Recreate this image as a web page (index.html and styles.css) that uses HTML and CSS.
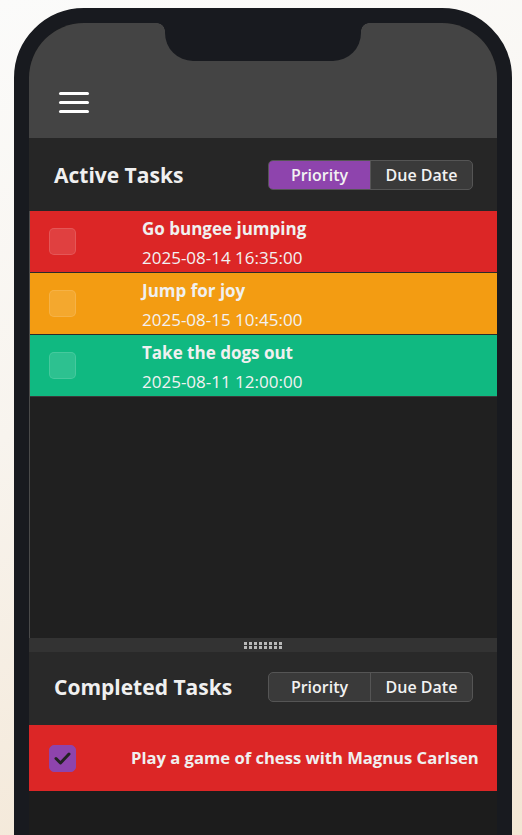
FILE: index.html
```html
<!DOCTYPE html>
<html lang="en">
<head>
<meta charset="utf-8">
<title>Tasks</title>
<link rel="stylesheet" href="styles.css">
</head>
<body>
<div class="phone">
  <div class="notch"></div>
  <div class="screen">
    <header class="topbar">
      <button class="menu" aria-label="Menu"><span></span><span></span><span></span></button>
    </header>

    <section class="panel">
      <div class="section-head">
        <h2>Active Tasks</h2>
        <div class="toggle">
          <button class="on">Priority</button>
          <button>Due Date</button>
        </div>
      </div>
      <ul class="list">
        <li class="task red">
          <span class="check"></span>
          <div class="info">
            <div class="title">Go bungee jumping</div>
            <div class="date">2025-08-14 16:35:00</div>
          </div>
        </li>
        <li class="task orange">
          <span class="check"></span>
          <div class="info">
            <div class="title">Jump for joy</div>
            <div class="date">2025-08-15 10:45:00</div>
          </div>
        </li>
        <li class="task green">
          <span class="check"></span>
          <div class="info">
            <div class="title">Take the dogs out</div>
            <div class="date">2025-08-11 12:00:00</div>
          </div>
        </li>
      </ul>
    </section>

    <div class="divider">
      <svg width="38" height="7" viewBox="0 0 38 7" aria-hidden="true">
        <g fill="#b9b9b9">
          <rect x="0" y="0" width="3" height="3"/><rect x="5" y="0" width="3" height="3"/><rect x="10" y="0" width="3" height="3"/><rect x="15" y="0" width="3" height="3"/><rect x="20" y="0" width="3" height="3"/><rect x="25" y="0" width="3" height="3"/><rect x="30" y="0" width="3" height="3"/><rect x="35" y="0" width="3" height="3"/>
          <rect x="0" y="4" width="3" height="3"/><rect x="5" y="4" width="3" height="3"/><rect x="10" y="4" width="3" height="3"/><rect x="15" y="4" width="3" height="3"/><rect x="20" y="4" width="3" height="3"/><rect x="25" y="4" width="3" height="3"/><rect x="30" y="4" width="3" height="3"/><rect x="35" y="4" width="3" height="3"/>
        </g>
      </svg>
    </div>

    <section class="panel completed">
      <div class="section-head">
        <h2>Completed Tasks</h2>
        <div class="toggle">
          <button>Priority</button>
          <button>Due Date</button>
        </div>
      </div>
      <ul class="done-list">
        <li class="task red done">
          <span class="check checked">
            <svg width="17" height="13" viewBox="0 0 17 13" aria-hidden="true"><path d="M2 6.5 L6.5 11 L15 2" fill="none" stroke="#222" stroke-width="3" stroke-linecap="round" stroke-linejoin="round"/></svg>
          </span>
          <div class="info">
            <div class="title">Play a game of chess with Magnus Carlsen</div>
          </div>
        </li>
      </ul>
    </section>
  </div>
</div>
</body>
</html>
```

FILE: styles.css
```css
* { box-sizing: border-box; }

html, body {
  margin: 0;
  padding: 0;
  height: 100%;
  overflow: hidden;
}

body {
  background: linear-gradient(165deg, #fbfbfa 0%, #f8f4ee 45%, #f3e6d4 100%);
  font-family: "Open Sans", "Noto Sans", sans-serif;
  color: #eeeeee;
}

.phone {
  position: relative;
  margin: 8px 0 0 14px;
  width: 498px;
  height: 900px;
  border: 15px solid #181a1f;
  border-radius: 70px;
  background: #1c1c1c;
  overflow: hidden;
}

.notch {
  position: absolute;
  top: 0;
  left: 136px;
  width: 196px;
  height: 38px;
  background: #181a1f;
  border-radius: 0 0 28px 28px;
  z-index: 2;
}
.notch::before,
.notch::after {
  content: "";
  position: absolute;
  top: 0;
  width: 8px;
  height: 8px;
}
.notch::before {
  left: -8px;
  background: radial-gradient(circle at 0 100%, transparent 7.5px, #181a1f 8px);
}
.notch::after {
  right: -8px;
  background: radial-gradient(circle at 100% 100%, transparent 7.5px, #181a1f 8px);
}

.screen {
  display: flex;
  flex-direction: column;
}

.topbar {
  height: 115px;
  background: #444444;
  padding: 69px 0 0 30px;
}

.menu {
  display: flex;
  flex-direction: column;
  gap: 6px;
  width: 30px;
  padding: 0;
  border: 0;
  background: none;
}
.menu span {
  display: block;
  height: 3px;
  width: 30px;
  border-radius: 2px;
  background: #ffffff;
}

.section-head {
  height: 73px;
  display: flex;
  align-items: center;
  justify-content: space-between;
  padding: 0 24px 0 25px;
  background: #262626;
}
.completed .section-head {
  background: #292929;
  padding-bottom: 3px;
}

h2 {
  margin: 0;
  font-size: 21px;
  font-weight: 700;
  color: #f0f0f0;
}

.toggle {
  display: flex;
  width: 205px;
  height: 30px;
  border: 1px solid #555555;
  border-radius: 5px;
  overflow: hidden;
  background: #3a3a3a;
}
.toggle button {
  flex: 1;
  border: 0;
  margin: 0;
  padding: 0;
  font-family: inherit;
  font-size: 16px;
  font-weight: 600;
  color: #f2f2f2;
  background: transparent;
}
.toggle button + button {
  border-left: 1px solid #555555;
}
.toggle button.on {
  background: #8e44ad;
  border-color: #8e44ad;
}

ul {
  list-style: none;
  margin: 0;
  padding: 0;
}

.list {
  height: 427px;
  background: #202020;
  border-left: 1px solid #4a4a4a;
}

.task {
  display: flex;
  align-items: center;
  height: 62px;
  padding-left: 19px;
  border-bottom: 1px solid #2b2b2b;
}
.task:last-child {
  border-bottom-color: #3a3a3a;
}
.red { background: #dc2626; }
.orange { background: #f39c12; }
.green { background: #10b981; }

.check {
  flex: none;
  width: 27px;
  height: 27px;
  border-radius: 5px;
  background: rgba(255, 255, 255, 0.12);
  border: 1px solid rgba(255, 255, 255, 0.12);
  display: flex;
  align-items: center;
  justify-content: center;
}
.check.checked {
  background: #8e44ad;
  border-color: #8e44ad;
}

.info {
  margin-left: 66px;
  padding-top: 5px;
  display: flex;
  flex-direction: column;
}
.title {
  font-size: 17px;
  font-weight: 700;
  line-height: 26px;
  color: #f0f0f0;
}
.date {
  font-size: 17px;
  line-height: 31px;
  color: #f2f2f2;
}

.divider {
  height: 14px;
  background: #333333;
  display: flex;
  align-items: center;
  justify-content: center;
}

.done-list .task {
  height: 66px;
  padding-left: 20px;
  border-bottom: 0;
}
.done .info {
  margin-left: 55px;
  padding-top: 0;
}
.done .title {
  font-size: 16.6px;
}
```
